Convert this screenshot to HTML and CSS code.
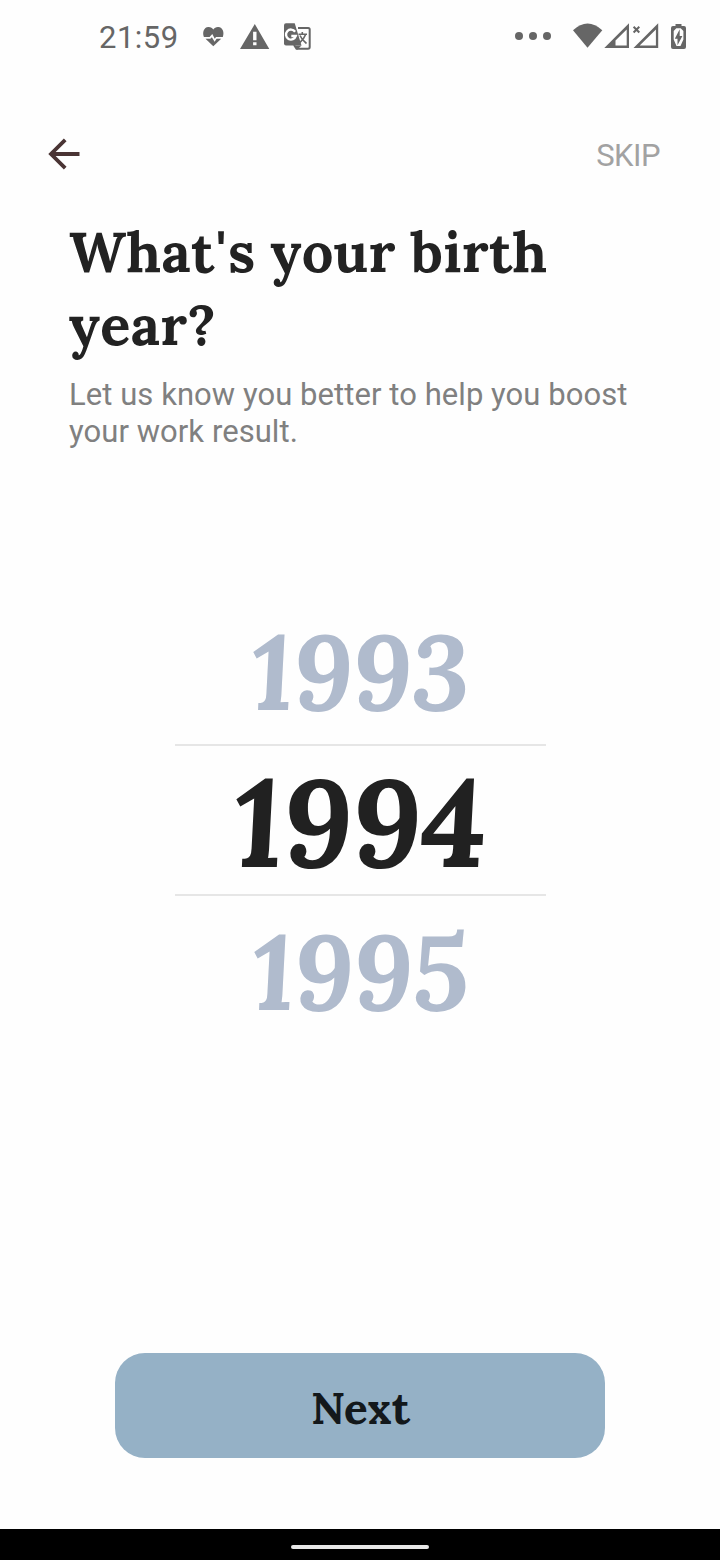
FILE: index.html
```html
<!DOCTYPE html>
<html lang="en">
<head>
<meta charset="utf-8">
<title>What's your birth year?</title>
<link rel="stylesheet" href="styles.css">
</head>
<body>
<div class="screen">
  <div class="status">
    <span class="clock">21:59</span>
    <svg class="status-left" width="110" height="30" viewBox="202 22 110 30">
      <path fill="#666" d="M213.300 46.200L205.500 38.800H210.300L211.900 37.200L214.600 41.800L216.600 38.800H221.200Z"/>
      <path fill="#666" d="M203.900 37C202.200 33 203.600 27.300 208.400 27.100C210.700 27 212.300 28.300 213.300 29.600C214.300 28.300 216 27 218.200 27.100C223 27.300 224.500 33 222.800 37H216L214.800 38.700L212.300 34L209.600 37Z"/>
      <path fill="#666" fill-rule="evenodd" d="M254.800 24L269.300 49H240ZM253.100 31.700V40.300H256.500V31.700ZM253.100 42.200V45.200H256.500V42.200Z"/>
      <path fill="none" stroke="#666" stroke-width="2" d="M298 28H308.200Q309.700 28 309.700 29.500V47Q309.700 48.800 308 48.800H296.500L294 45"/>
      <path fill="#666" d="M286 23.300H294.700L301.500 45.500H286Q284 45.500 284 43.500V25.300Q284 23.300 286 23.300Z"/>
      <path fill="#666" d="M295 45.500H301.500L297 50Z"/>
      <path fill="none" stroke="#fff" stroke-width="2.400" d="M295.100 31.700A5 5 0 1 0 295.800 36H291.300"/>
      <path fill="none" stroke="#666" stroke-width="1.600" d="M298.500 34.200H307M302.300 32V34M305.600 34.500Q304 39 299.800 42.700M300 35.500Q302 40 306.500 43.500"/>
    </svg>
    <svg class="status-right" width="174" height="30" viewBox="514 22 174 30">
      <g fill="#666">
        <circle cx="519" cy="36" r="4"/><circle cx="533" cy="36" r="4"/><circle cx="547" cy="36" r="4"/>
        <path d="M573 30.200Q587.500 16.800 602.300 30.200L587.500 47.700Z"/>
        <path fill-rule="evenodd" d="M604.300 48L629 23.300V48ZM615.500 45.500H626.700V29.400L615.500 40.600Z"/>
        <path fill-rule="evenodd" d="M633.500 48L658.200 23.300V48ZM639.700 45.500H655.900V29.400Z"/>
        <path fill-rule="evenodd" d="M675.500 24H681.500V26H684Q686 26 686 28V47Q686 49 684 49H673Q671 49 671 47V28Q671 26 673 26H675.500ZM676.300 28.300L673.700 31V39.500L676.500 46H680.500L683.400 39.500V31L680.700 28.300Z"/>
        <path d="M679.700 29.300L674.800 38.800H677.500V45.300L682.400 35.900H679.700Z"/>
      </g>
      <path fill="none" stroke="#666" stroke-width="2" d="M633.600 26.800L639.300 32.500M639.300 26.800L633.600 32.500"/>
    </svg>
  </div>
  <div class="toolbar">
    <svg class="back" width="34" height="34" viewBox="47.500 137 34 34"><path fill="none" stroke="#4a3434" stroke-width="3.800" d="M80 154H52M65.700 139.900L51.500 154L65.700 168.200"/></svg>
    <span class="skip">SKIP</span>
  </div>
  <div class="intro">
    <h1>What<span class="apostrophe">'</span>s your birth<br>year?</h1>
    <p>Let us know you better to help you boost<br>your work result.</p>
  </div>
  <div class="picker">
    <div class="year">1993</div>
    <div class="year selected">1994</div>
    <div class="year">1995</div>
  </div>
  <button class="next">Next</button>
  <div class="navbar"><div class="handle"></div></div>
</div>
</body>
</html>
```
FILE: styles.css
```css
* { box-sizing: border-box; }
body { margin: 0; background: #fefefe; font-family: Roboto, sans-serif; }
.screen { width: 720px; height: 1560px; display: flex; flex-direction: column; align-items: center; overflow: hidden; }
.status { width: 100%; height: 74px; display: flex; align-items: center; padding: 0 32px 0 99px; color: #666; }
.clock { width: 103px; font-size: 31px; font-weight: 450; letter-spacing: .5px; white-space: nowrap; }
.status-right { margin-left: auto; }
.toolbar { width: 100%; height: 141px; display: flex; align-items: flex-start; justify-content: space-between; padding: 63px 60px 0 47px; }
.skip { font-size: 31px; line-height: 37px; letter-spacing: -.5px; color: #a2a2a2; }
.intro { width: 100%; height: 381px; padding-left: 69px; }
h1 { margin: 0; font: 700 56px/73px Lora, "Liberation Serif", serif; font-kerning: none; letter-spacing: .3px; color: #222; white-space: nowrap; }
.apostrophe { margin: 0 1.500px 0 1.300px; }
.intro p { margin: 15px 0 0; font-size: 31px; line-height: 37px; letter-spacing: .06px; color: #808080; white-space: nowrap; }
.picker { width: 371px; display: flex; flex-direction: column; align-items: stretch; }
.year { height: 148px; padding: 2px 0 0 1px; text-align: center; font: italic 700 105.500px/148px Lora, "Liberation Serif", serif; color: #b0bbcd; }
.year.selected { height: 152px; border: solid #e6e6e6; border-width: 2px 0; font-size: 123px; color: #212121; }
.next { width: 490px; height: 105px; margin-top: 309px; border: 0; border-radius: 30px; background: #95b1c6; color: #13181b; font: 700 44px/58px Lora, "Liberation Serif", serif; padding: 5px 0 0 1px; }
.navbar { width: 100%; height: 31px; margin-top: auto; background: #000; display: flex; justify-content: center; align-items: flex-end; padding-bottom: 11px; }
.handle { width: 138px; height: 4px; border-radius: 2px; background: #e8e8e8; }
```
